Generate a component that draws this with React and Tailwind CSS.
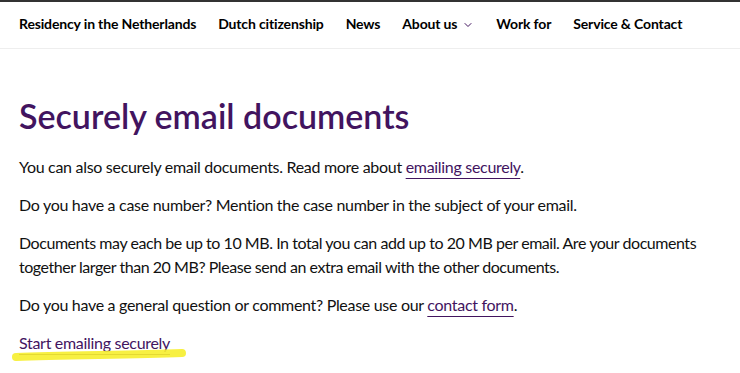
import { ChevronDown } from 'lucide-react'

const navItems = [
  { label: 'Residency in the Netherlands' },
  { label: 'Dutch citizenship' },
  { label: 'News' },
  { label: 'About us', menu: true },
  { label: 'Work for' },
  { label: 'Service & Contact' },
]

function Link({ children }) {
  return (
    <a href="#" className="text-[#42145f] underline decoration-[#42145f] decoration-1 underline-offset-[5px]">
      {children}
    </a>
  )
}

export default function App() {
  return (
    <div className="w-[740px] h-[373px] overflow-hidden bg-white text-[#000] font-['Lato',sans-serif]">
      <div className="h-[2px] bg-[#333]" />
      {/* navigation */}
      <nav className="h-[47px] border-b border-[#eee] flex items-center gap-[22px] px-[19px] pb-[3px] whitespace-nowrap">
        {navItems.map((item) => (
          <span key={item.label} className="flex items-center gap-[5px] text-[14px] font-bold tracking-[-0.15px]">
            {item.label}
            {item.menu && <ChevronDown size={12} strokeWidth={2} className="text-[#42145f] mt-[2px]" />}
          </span>
        ))}
      </nav>

      <main className="px-[19px] pt-[45px]">
        <h1 className="text-[34px] leading-[44px] text-[#42145f] font-semibold mb-[17px]">
          Securely email documents
        </h1>
        <div className="text-[16px] leading-[24px] tracking-[-0.3px] flex flex-col gap-[14px] text-[#111]">
          <p>
            You can also securely email documents. Read more about <Link>emailing securely</Link>.
          </p>
          <p>Do you have a case number? Mention the case number in the subject of your email.</p>
          <p className="tracking-[-0.45px]">
            Documents may each be up to 10 MB. In total you can add up to 20 MB per email. Are your documents
            together larger than 20 MB? Please send an extra email with the other documents.
          </p>
          <p>
            Do you have a general question or comment? Please use our <Link>contact form</Link>.
          </p>
          <p className="relative w-fit">
            <Link>Start emailing securely</Link>
            <svg className="absolute left-[-7px] top-[15px] pointer-events-none" width="176" height="18" viewBox="0 0 176 18">
              <path
                d="M4 11 C 50 9, 115 9, 170 7"
                stroke="#f6ee2e"
                strokeOpacity="0.9"
                strokeWidth="8"
                strokeLinecap="round"
                fill="none"
              />
            </svg>
          </p>
        </div>
      </main>
    </div>
  )
}
